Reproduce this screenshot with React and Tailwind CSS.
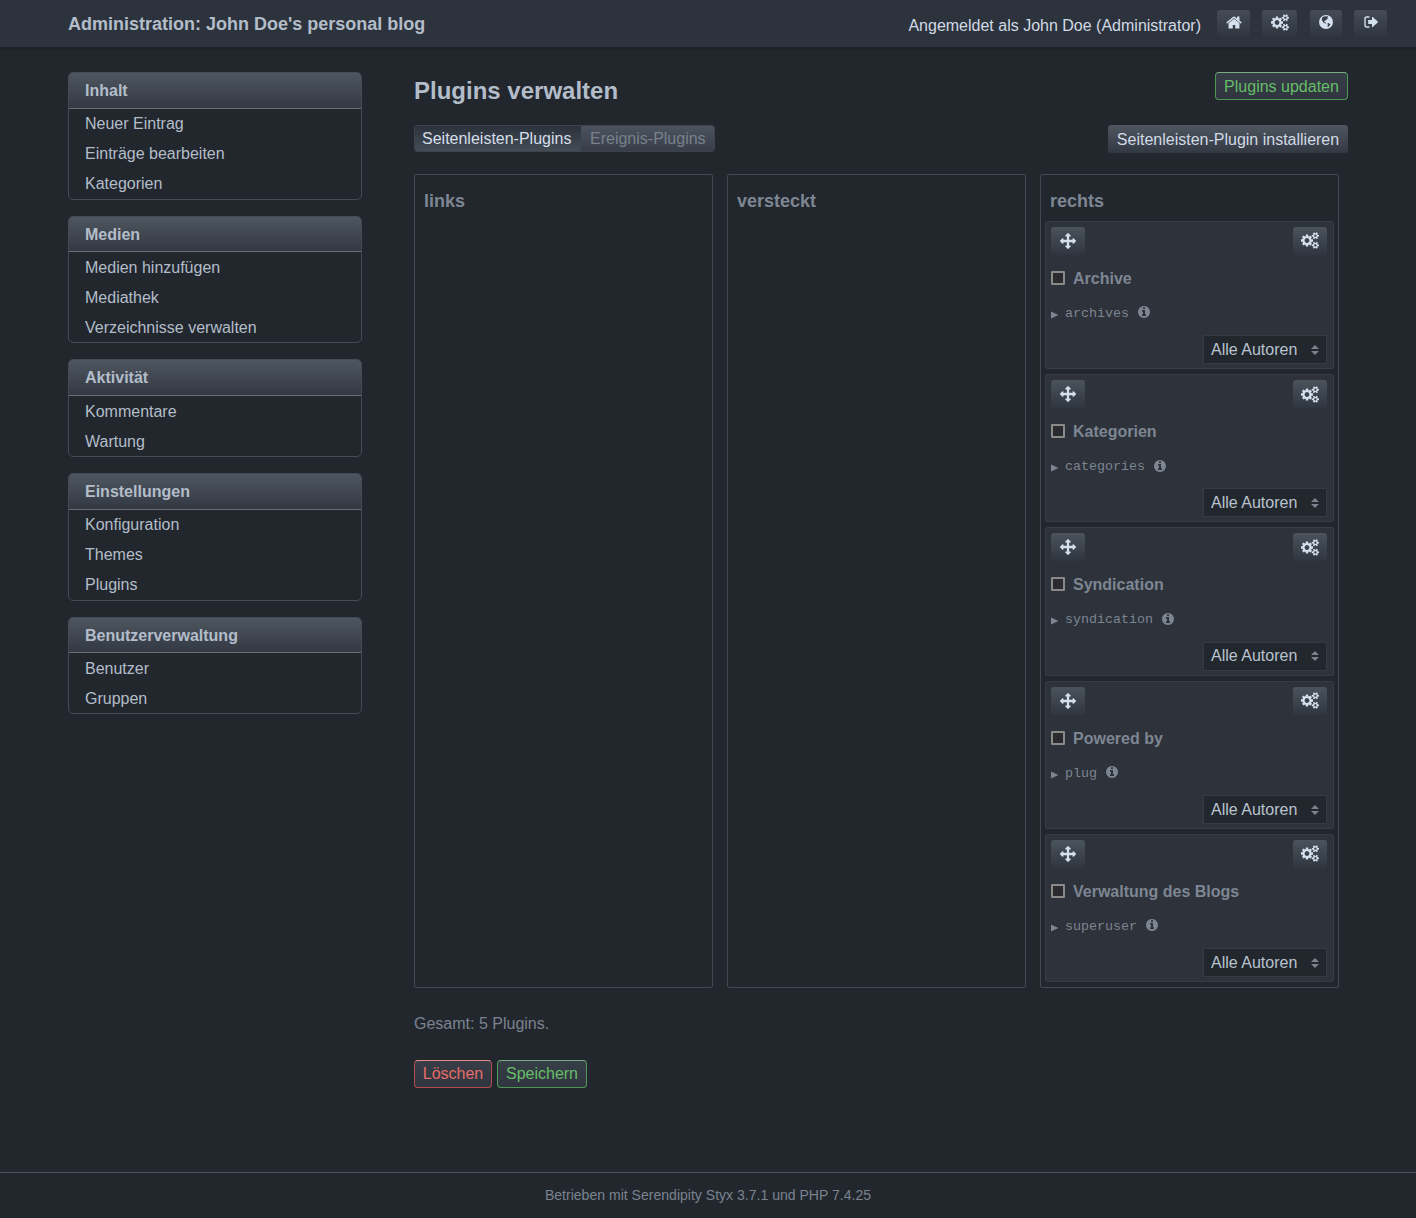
const COGS =
  "M896 896q0-106-75-181t-181-75-181 75-75 181 75 181 181 75 181-75 75-181zm768 512q0-52-38-90t-90-38-90 38-38 90q0 53 37.5 90.5t90.5 37.5 90.5-37.5 37.5-90.5zm0-1024q0-52-38-90t-90-38-90 38-38 90q0 53 37.5 90.5t90.5 37.5 90.5-37.5 37.5-90.5zm-384 421v185q0 10-7 19.5t-16 10.5l-155 24q-11 35-32 76 34 48 90 115 7 11 7 20 0 12-7 19-23 30-82.5 89.5t-78.5 59.5q-11 0-21-7l-115-90q-37 19-77 31-11 108-23 155-7 24-30 24h-186q-11 0-20-7.5t-10-17.5l-23-153q-34-10-75-31l-118 89q-7 7-20 7-11 0-21-8-144-133-144-160 0-9 7-19 10-14 41-53t47-61q-23-44-35-82l-152-24q-10-1-17-9.5t-7-19.5v-185q0-10 7-19.5t16-10.5l155-24q11-35 32-76-34-48-90-115-7-11-7-20 0-12 7-20 22-30 82-89t79-59q11 0 21 7l115 90q34-18 77-32 11-108 23-154 7-24 30-24h186q11 0 20 7.5t10 17.5l23 153q34 10 75 31l118-89q8-7 20-7 11 0 21 8 144 133 144 160 0 8-7 19-12 16-42 54t-45 60q23 48 34 82l152 23q10 2 17 10.5t7 19.5zm640 533v140q0 16-149 31-12 27-30 52 51 113 51 138 0 4-4 7-122 71-124 71-8 0-46-47t-52-68q-20 2-30 2t-30-2q-14 21-52 68t-46 47q-2 0-124-71-4-3-4-7 0-25 51-138-18-25-30-52-149-15-149-31v-140q0-16 149-31 13-29 30-52-51-113-51-138 0-4 4-7 4-2 35-20t59-34 30-16q8 0 46 46.5t52 67.5q20-2 30-2t30 2q51-71 92-112l6-2q4 0 124 70 4 3 4 7 0 25-51 138 17 23 30 52 149 15 149 31zm0-1024v140q0 16-149 31-12 27-30 52 51 113 51 138 0 4-4 7-122 71-124 71-8 0-46-47t-52-68q-20 2-30 2t-30-2q-14 21-52 68t-46 47q-2 0-124-71-4-3-4-7 0-25 51-138-18-25-30-52-149-15-149-31v-140q0-16 149-31 13-29 30-52-51-113-51-138 0-4 4-7 4-2 35-20t59-34 30-16q8 0 46 46.5t52 67.5q20-2 30-2t30 2q51-71 92-112l6-2q4 0 124 70 4 3 4 7 0 25-51 138 17 23 30 52 149 15 149 31z";
const HOME =
  "M1408 992v480q0 26-19 45t-45 19h-384v-384h-256v384h-384q-26 0-45-19t-19-45v-480q0-1 .5-3t.5-3l575-474 575 474q1 2 1 6zm223-69l-62 74q-8 9-21 11h-3q-13 0-21-7l-692-577-692 577q-12 8-24 7-13-2-21-11l-62-74q-8-10-7-23.5t11-21.5l719-599q32-26 76-26t76 26l244 204v-195q0-14 9-23t23-9h192q14 0 23 9t9 23v408l219 182q10 8 11 21.5t-7 23.5z";
const MOVE =
  "M1792 896q0 26-19 45l-256 256q-19 19-45 19t-45-19-19-45v-128h-384v384h128q26 0 45 19t19 45-19 45l-256 256q-19 19-45 19t-45-19l-256-256q-19-19-19-45t19-45 45-19h128v-384h-384v128q0 26-19 45t-45 19-45-19l-256-256q-19-19-19-45t19-45l256-256q19-19 45-19t45 19 19 45v128h384v-384h-128q-26 0-45-19t-19-45 19-45l256-256q19-19 45-19t45 19l256 256q19 19 19 45t-19 45-45 19h-128v384h384v-128q0-26 19-45t45-19 45 19l256 256q19 19 19 45z";
const INFO =
  "M1024 1376v-160q0-14-9-23t-23-9h-96v-512q0-14-9-23t-23-9h-320q-14 0-23 9t-9 23v160q0 14 9 23t23 9h96v320h-96q-14 0-23 9t-9 23v160q0 14 9 23t23 9h448q14 0 23-9t9-23zm-128-896v-160q0-14-9-23t-23-9h-192q-14 0-23 9t-9 23v160q0 14 9 23t23 9h192q14 0 23-9t9-23zm640 416q0 209-103 385.5t-279.5 279.5-385.5 103-385.5-103-279.5-279.5-103-385.5 103-385.5 279.5-279.5 385.5-103 385.5 103 279.5 279.5 103 385.5z";

const Glyph = ({ d, viewBox, className }) => (
  <svg viewBox={viewBox} className={className} fill="currentColor">
    <path d={d} />
  </svg>
);
const Cogs = ({ className }) => (
  <Glyph d={COGS} viewBox="0 0 1920 1792" className={`h-[17px] w-[18px] ${className}`} />
);

const Globe = () => (
  <svg viewBox="0 0 14 14" className="mb-[2px] h-[14px] w-[14px]">
    <circle cx="7" cy="7" r="7" fill="currentColor" />
    <path
      d="M3.4 2.2 5.6 1.3 7.3 1.6 8.3 1.1 9.2 2.1 8.2 2.7 9 3.6 7.6 4.4 6.6 5.6 5.4 5.9 5.2 6.9 6.6 7.6 7.2 8.6 6.4 8.5 4.4 7.6 3.4 6 2.7 4.4z"
      fill="#3a414c"
    />
    <path d="M8.4 8.4 9.6 8.1 10.9 9 11.3 9.7 10.3 11 9 12 8.4 11.4 8.9 10z" fill="#3a414c" />
  </svg>
);

const SignOut = () => (
  <svg viewBox="0 0 14 12" className="mb-[2px] h-3 w-[14px]" fill="none">
    <path d="M5.4 1H2.6Q1 1 1 2.6v6.8Q1 11 2.6 11h2.8" stroke="currentColor" strokeWidth="1.4" />
    <path d="M4.2 3.9H8V1.2q0-.9.7-.3l5 4.6q.5.5 0 1l-5 4.6q-.7.6-.7-.3V8.1H4.2z" fill="currentColor" />
  </svg>
);

const menu = [
  { title: "Inhalt", items: ["Neuer Eintrag", "Einträge bearbeiten", "Kategorien"], box: "h-[128px] mb-4", head: "h-9", list: "" },
  { title: "Medien", items: ["Medien hinzufügen", "Mediathek", "Verzeichnisse verwalten"], box: "h-[127px] mb-4", head: "h-[35px] pt-px", list: "pt-px" },
  { title: "Aktivität", items: ["Kommentare", "Wartung"], box: "h-[98px] mb-4", head: "h-9", list: "pt-px" },
  { title: "Einstellungen", items: ["Konfiguration", "Themes", "Plugins"], box: "h-[128px] mb-4", head: "h-9", list: "" },
  { title: "Benutzerverwaltung", items: ["Benutzer", "Gruppen"], box: "h-[97px]", head: "h-[35px] pt-px", list: "pt-px" },
];

const plugins = [
  { title: "Archive", id: "archives" },
  { title: "Kategorien", id: "categories" },
  { title: "Syndication", id: "syndication" },
  { title: "Powered by", id: "plug" },
  { title: "Verwaltung des Blogs", id: "superuser" },
];

const IconButton = ({ className, children }) => (
  <button className={`flex items-center justify-center rounded-[3px] bg-linear-to-b text-[#d5e0ee] ${className}`}>
    {children}
  </button>
);

const PluginCard = ({ title, id }) => (
  <li className="flex h-[148.3px] flex-col rounded-[2px] border border-[#363d47] bg-[#2d323b] pt-[5px] pr-[6px] pl-[5px]">
    <div className="flex justify-between">
      <IconButton className="h-[28px] w-[34px] from-[#4b535d] to-[#2f3640]">
        <Glyph d={MOVE} viewBox="0 0 1792 1792" className="h-4 w-4" />
      </IconButton>
      <IconButton className="h-[28px] w-[34px] from-[#4b535d] to-[#2f3640]">
        <Cogs />
      </IconButton>
    </div>
    <label className="mt-[11px] flex h-6 items-center font-bold text-[#7d8692]">
      <span className="mr-2 h-[14px] w-[14px] rounded-[1px] border-2 border-[#8b8a89] bg-[#2a2b2f]" />
      <span className="pt-[2px]">{title}</span>
    </label>
    <div className="mt-[14px] flex h-5 items-center text-[#7c8590]">
      <svg viewBox="0 0 8 8" className="mt-[2px] mr-[6px] h-2 w-2" fill="currentColor">
        <path d="M0 .5 7.5 4 0 7.5z" />
      </svg>
      <code className="font-['Liberation_Mono',monospace] text-[13.33px] leading-5">{id}</code>
      <Glyph d={INFO} viewBox="0 128 1536 1536" className="mb-[3px] ml-[9px] h-3 w-3" />
    </div>
    <div className="mt-[11.35px] flex h-[29px] w-[124px] items-center justify-between self-end border border-[#343b45] bg-[#22272e] pr-[7px] pl-[7px] text-[#b9c3cf]">
      Alle Autoren
      <svg viewBox="0 0 8 10" className="h-[10px] w-2" fill="#79828d">
        <path d="M0 4 4 0 8 4zM0 6 4 10 8 6z" />
      </svg>
    </div>
  </li>
);

const Column = ({ title, children }) => (
  <section className="h-[814px] w-[299px] rounded-[2px] border border-[#434951] px-1">
    <h3 className="pt-[15px] pl-[5px] text-lg leading-[22px] font-bold text-[#7d8692]">{title}</h3>
    <ul className="mt-[8.8px] flex flex-col gap-[5px]">{children}</ul>
  </section>
);

export default function App() {
  return (
    <div className="flex h-[1218px] w-[1416px] flex-col bg-[#22272e] font-['Liberation_Sans',Arial,sans-serif] text-base leading-6 text-[#b3bdc9]">
      <header className="flex h-12 shrink-0 items-start justify-between border-b border-[#1c2027] bg-[#2d333d] pr-[29px] pl-[68px] shadow-[0_1px_2px_#1b1f26]">
        <h1 className="pt-[10px] text-lg font-bold">Administration: John Doe's personal blog</h1>
        <div className="flex text-[#d1dae5]">
          <span className="mr-4 pt-[14px]">Angemeldet als John Doe (Administrator)</span>
          <div className="flex pt-[10px]">
            <IconButton className="mr-3 h-[26px] w-[33px] from-[#454c57] to-[#2f3640]">
              <Glyph d={HOME} viewBox="0 0 1664 1792" className="mb-px h-[17px] w-4" />
            </IconButton>
            <IconButton className="mr-[13px] h-[26px] w-[35px] from-[#454c57] to-[#2f3640]">
              <Cogs className="mb-[2px]" />
            </IconButton>
            <IconButton className="mr-3 h-[26px] w-8 from-[#454c57] to-[#2f3640]">
              <Globe />
            </IconButton>
            <IconButton className="h-[26px] w-[33px] from-[#454c57] to-[#2f3640]">
              <SignOut />
            </IconButton>
          </div>
        </div>
      </header>

      <div className="flex grow pt-6 pl-[68px]">
        <nav className="w-[294px]">
          {menu.map((group) => (
            <section key={group.title} className={`overflow-hidden rounded-[5px] border border-[#444b54] ${group.box}`}>
              <h2 className={`flex items-center border-b border-[#68717a] bg-linear-to-b from-[#4e5660] to-[#333943] pl-4 font-bold ${group.head}`}>
                {group.title}
              </h2>
              <ul className={group.list}>
                {group.items.map((item) => (
                  <li key={item} className="h-[30px] pl-4 leading-[30px]">
                    {item}
                  </li>
                ))}
              </ul>
            </section>
          ))}
        </nav>

        <main className="ml-[52px] w-[934px]">
          <div className="flex h-[53px] justify-between">
            <h2 className="pt-1 text-2xl leading-[30px] font-bold">Plugins verwalten</h2>
            <button className="h-[28px] w-[133px] rounded-[4px] border border-[#4c9a54] border-t-[#79ad80] bg-linear-to-b from-[#373e47] to-[#30353f] pt-px text-[#66bd68]">
              Plugins updaten
            </button>
          </div>
          <div className="flex h-[49px] justify-between">
            <div className="flex h-[27px] overflow-hidden rounded-[3px] border border-[#3c434d]">
              <span className="w-[166px] bg-linear-to-b from-[#2c323b] to-[#444c56] pt-px pl-[7px] text-[#d5dfea]">Seitenleisten-Plugins</span>
              <span className="w-[133px] bg-linear-to-b from-[#4b535e] to-[#383e49] pt-px pl-[9px] text-[#78818d]">Ereignis-Plugins</span>
            </div>
            <button className="h-[28px] w-[240px] rounded-[3px] bg-linear-to-b from-[#4e5660] to-[#333943] pt-px text-[#d1dae5]">
              Seitenleisten-Plugin installieren
            </button>
          </div>
          <div className="flex gap-[14px]">
            <Column title="links" />
            <Column title="versteckt" />
            <Column title="rechts">
              {plugins.map((p) => (
                <PluginCard key={p.id} {...p} />
              ))}
            </Column>
          </div>
          <p className="mt-6 text-[#7a838e]">Gesamt: 5 Plugins.</p>
          <div className="mt-6 flex gap-[5px]">
            <button className="h-[28px] w-[78px] rounded-[4px] border border-[#b04d51] border-t-[#e58e8d] bg-linear-to-b from-[#373e47] to-[#30353f] text-[#e56c68]">
              Löschen
            </button>
            <button className="h-[28px] w-[90px] rounded-[4px] border border-[#4c9a54] border-t-[#79ad80] bg-linear-to-b from-[#373e47] to-[#30353f] text-[#66bd68]">
              Speichern
            </button>
          </div>
        </main>
      </div>

      <footer className="flex h-[46px] shrink-0 items-center justify-center border-t border-[#4d535b] pb-px text-[14.05px] text-[#7a838e]">
        Betrieben mit Serendipity Styx 3.7.1 und PHP 7.4.25
      </footer>
    </div>
  );
}
